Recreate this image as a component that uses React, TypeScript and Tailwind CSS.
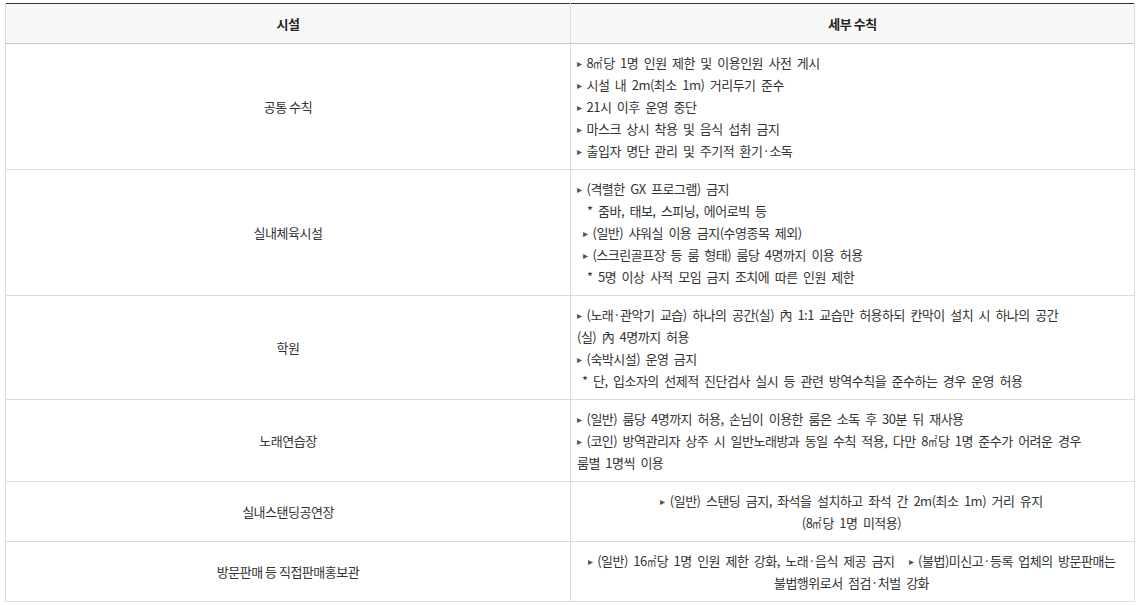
import React from "react";

const B = () => <span className="text-[#555] text-[10px] align-[1px] mr-[5px] [word-spacing:0]">▸</span>;
const M2 = () => (
  <span className="inline-block w-[10px] align-bottom tracking-normal">
    <span className="inline-block scale-x-[0.72] origin-left">㎡</span>
  </span>
);

const rows: { name: string; center?: boolean; lines: React.ReactNode[] }[] = [
  {
    name: "공통 수칙",
    lines: [
      <><B />8<M2 />당 1명 인원 제한 및 이용인원 사전 게시</>,
      <><B />시설 내 2m(최소 1m) 거리두기 준수</>,
      <><B />21시 이후 운영 중단</>,
      <><B />마스크 상시 착용 및 음식 섭취 금지</>,
      <><B />출입자 명단 관리 및 주기적 환기·소독</>,
    ],
  },
  {
    name: "실내체육시설",
    lines: [
      <><B />(격렬한 GX 프로그램) 금지</>,
      <><span className="pl-[10px]">* 줌바, 태보, 스피닝, 에어로빅 등</span></>,
      <><span className="pl-[6px]"><B />(일반) 샤워실 이용 금지(수영종목 제외)</span></>,
      <><span className="pl-[6px]"><B />(스크린골프장 등 룸 형태) 룸당 4명까지 이용 허용</span></>,
      <><span className="pl-[10px]">* 5명 이상 사적 모임 금지 조치에 따른 인원 제한</span></>,
    ],
  },
  {
    name: "학원",
    lines: [
      <><B />(노래·관악기 교습) 하나의 공간(실) 內 1:1 교습만 허용하되 칸막이 설치 시 하나의 공간</>,
      <>(실) 內 4명까지 허용</>,
      <><B />(숙박시설) 운영 금지</>,
      <><span className="pl-[5px]">* 단, 입소자의 선제적 진단검사 실시 등 관련 방역수칙을 준수하는 경우 운영 허용</span></>,
    ],
  },
  {
    name: "노래연습장",
    lines: [
      <><B />(일반) 룸당 4명까지 허용, 손님이 이용한 룸은 소독 후 30분 뒤 재사용</>,
      <><B />(코인) 방역관리자 상주 시 일반노래방과 동일 수칙 적용, 다만 8<M2 />당 1명 준수가 어려운 경우</>,
      <>룸별 1명씩 이용</>,
    ],
  },
  {
    name: "실내스탠딩공연장",
    center: true,
    lines: [
      <><B />(일반) 스탠딩 금지, 좌석을 설치하고 좌석 간 2m(최소 1m) 거리 유지</>,
      <>(8<M2 />당 1명 미적용)</>,
    ],
  },
  {
    name: "방문판매 등 직접판매홍보관",
    center: true,
    lines: [
      <><B />(일반) 16<M2 />당 1명 인원 제한 강화, 노래·음식 제공 금지<span className="inline-block w-[14px]" /><B />(불법)미신고·등록 업체의 방문판매는</>,
      <>불법행위로서 점검·처벌 강화</>,
    ],
  },
];

export default function App() {
  return (
    <div
      className="bg-white pt-[3px] px-[5px] w-[1139px] h-[605px] text-[13px] text-[#333] tracking-[-0.5px]"
      style={{ fontFamily: '"Noto Sans CJK KR", "Noto Sans", sans-serif' }}
    >
      <table className="w-[1130px] border-collapse table-fixed">
        <colgroup>
          <col className="w-[565px]" />
          <col />
        </colgroup>
        <thead>
          <tr className="bg-[#f8f8f8] border-t border-t-[#333] border-b border-b-[#c4c4c4]">
            <th className="h-[40px] p-0 border-l border-r border-[#dcdcdc] font-bold text-[#222] text-center">시설</th>
            <th className="h-[40px] p-0 border-r border-[#dcdcdc] font-bold text-[#222] text-center">세부 수칙</th>
          </tr>
        </thead>
        <tbody>
          {rows.map((r, i) => (
            <tr key={i} className="border-b border-[#dcdcdc]">
              <td className="border-l border-r border-[#dcdcdc] text-center align-middle">{r.name}</td>
              <td
                className={
                  "border-r border-[#dcdcdc] pt-2 pb-[7px] pl-[6px] pr-2 leading-[22px] [word-spacing:3px] " +
                  (r.center ? "text-center" : "text-left")
                }
              >
                {r.lines.map((l, j) => (
                  <div key={j} className="whitespace-nowrap">{l}</div>
                ))}
              </td>
            </tr>
          ))}
        </tbody>
      </table>
    </div>
  );
}
